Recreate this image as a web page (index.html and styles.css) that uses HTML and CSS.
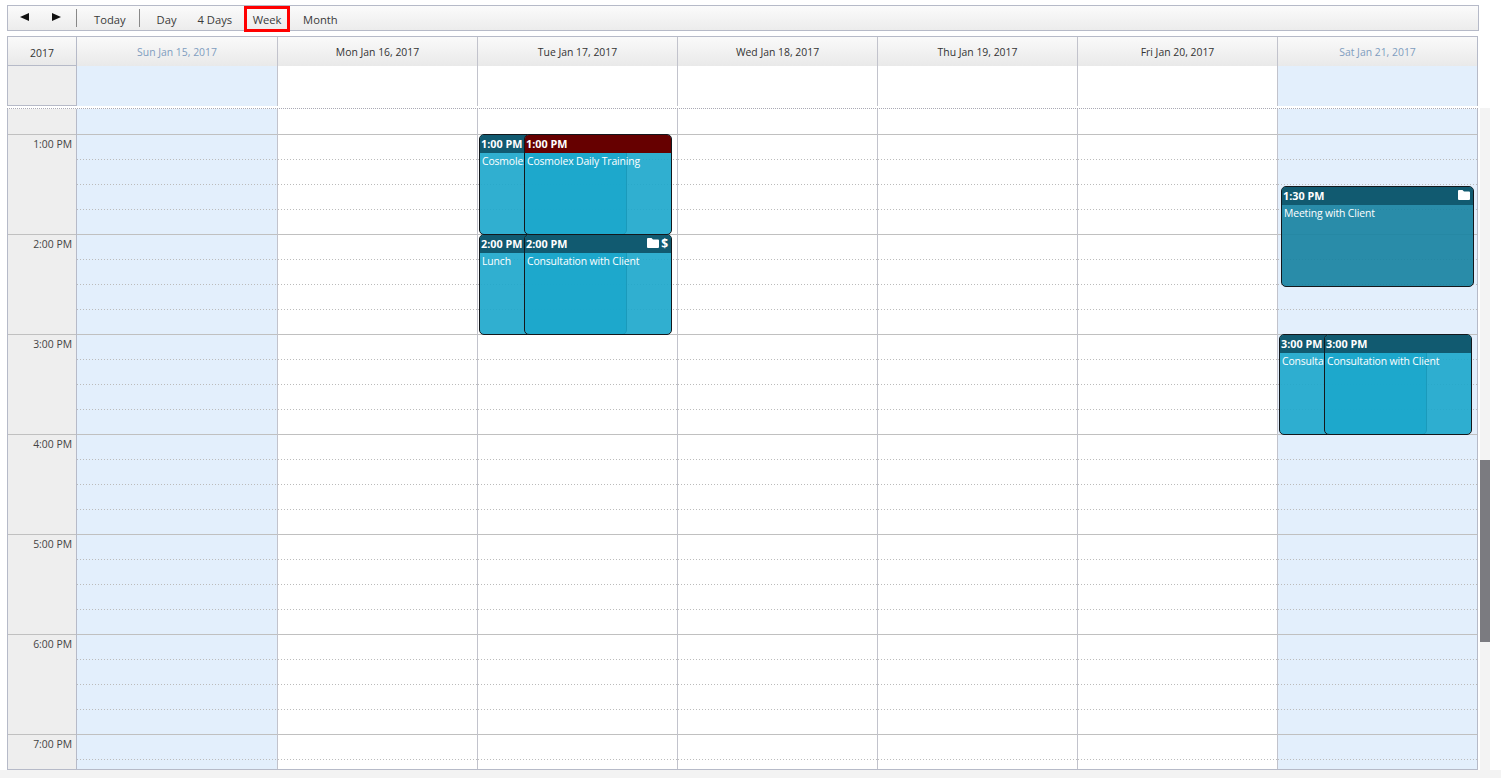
FILE: index.html
```html
<!DOCTYPE html>
<html lang="en">
<head>
    <meta charset="UTF-8">
    <meta name="viewport" content="width=device-width, initial-scale=1.0">
    <title>Week Calendar</title>
    <link rel="stylesheet" href="styles.css">
</head>
<body>
    <div class="toolbar">
        <button class="nav-btn" aria-label="Previous">
            <svg width="9" height="8" viewBox="0 0 9 8"><path d="M0 4 9 0V8Z"/></svg>
        </button>
        <button class="nav-btn" aria-label="Next">
            <svg width="9" height="8" viewBox="0 0 9 8"><path d="M9 4 0 0V8Z"/></svg>
        </button>
        <span class="sep sep-first"></span>
        <button class="tb-btn">Today</button>
        <span class="sep"></span>
        <button class="tb-btn tb-day">Day</button>
        <button class="tb-btn">4 Days</button>
        <button class="tb-btn active">Week</button>
        <button class="tb-btn">Month</button>
    </div>

    <div class="cal-head">
        <div class="year-col">
            <div class="year-cell">2017</div>
            <div class="allday-time"></div>
        </div>
        <div class="head-col weekend"><div class="head-cell">Sun Jan 15, 2017</div><div class="allday"></div></div>
        <div class="head-col"><div class="head-cell">Mon Jan 16, 2017</div><div class="allday"></div></div>
        <div class="head-col"><div class="head-cell">Tue Jan 17, 2017</div><div class="allday"></div></div>
        <div class="head-col"><div class="head-cell">Wed Jan 18, 2017</div><div class="allday"></div></div>
        <div class="head-col"><div class="head-cell">Thu Jan 19, 2017</div><div class="allday"></div></div>
        <div class="head-col"><div class="head-cell">Fri Jan 20, 2017</div><div class="allday"></div></div>
        <div class="head-col weekend"><div class="head-cell">Sat Jan 21, 2017</div><div class="allday"></div></div>
    </div>

    <div class="cal-wrap">
        <div class="cal-body">
            <div class="time-col" id="time-col"></div>
            <div class="day-col weekend"></div>
            <div class="day-col"></div>
            <div class="day-col">
                <div class="event back ev-1pm">
                    <div class="ev-head"><span class="ev-time">1:00 PM</span></div>
                    <div class="ev-title">Cosmolex Daily Training</div>
                </div>
                <div class="event front ev-1pm">
                    <div class="ev-head red"><span class="ev-time">1:00 PM</span></div>
                    <div class="ev-title">Cosmolex Daily Training</div>
                </div>
                <div class="event back ev-2pm">
                    <div class="ev-head"><span class="ev-time">2:00 PM</span></div>
                    <div class="ev-title">Lunch</div>
                </div>
                <div class="event front ev-2pm">
                    <div class="ev-head">
                        <span class="ev-time">2:00 PM</span>
                        <svg class="folder" width="12" height="10" viewBox="0 0 12 10"><path d="M1 0H4.5L6 1.5H11A1 1 0 0 1 12 2.500V9A1 1 0 0 1 11 10H1A1 1 0 0 1 0 9V1A1 1 0 0 1 1 0Z"/></svg>
                        <span class="dollar">$</span>
                    </div>
                    <div class="ev-title">Consultation with Client</div>
                </div>
            </div>
            <div class="day-col"></div>
            <div class="day-col"></div>
            <div class="day-col"></div>
            <div class="day-col weekend">
                <div class="event muted ev-meeting">
                    <div class="ev-head">
                        <span class="ev-time">1:30 PM</span>
                        <svg class="folder" width="12" height="10" viewBox="0 0 12 10"><path d="M1 0H4.5L6 1.5H11A1 1 0 0 1 12 2.500V9A1 1 0 0 1 11 10H1A1 1 0 0 1 0 9V1A1 1 0 0 1 1 0Z"/></svg>
                    </div>
                    <div class="ev-title">Meeting with Client</div>
                </div>
                <div class="event back ev-3pm">
                    <div class="ev-head"><span class="ev-time">3:00 PM</span></div>
                    <div class="ev-title">Consultation with Client</div>
                </div>
                <div class="event front ev-3pm">
                    <div class="ev-head"><span class="ev-time">3:00 PM</span></div>
                    <div class="ev-title">Consultation with Client</div>
                </div>
            </div>
        </div>
        <div class="scroll-track"><div class="scroll-thumb"></div></div>
    </div>
    <div class="bottom-strip"></div>

    <script src="calendar.js"></script>
</body>
</html>
```

FILE: styles.css
```css
html, body {
    height: 100%;
    overflow: hidden;
}
body {
    font-family: "Open Sans", "Liberation Sans", sans-serif;
    font-size: 10.4px;
    color: #333;
    background-color: #fff;
    margin: 0;
    padding: 0;
}
button {
    font: inherit;
    color: inherit;
    background: none;
    border: 0;
    padding: 0;
}

.toolbar {
    box-sizing: border-box;
    display: flex;
    align-items: center;
    width: 1472px;
    height: 26px;
    margin: 5px 0 5px 7px;
    padding-left: 12px;
    border: 1px solid #b6bac8;
    background: linear-gradient(#fbfbfb, #ececec);
}
.nav-btn {
    display: flex;
    width: 32px;
    height: 8px;
    margin-top: -3px;
    fill: #111;
}
.sep {
    width: 1px;
    height: 18px;
    background-color: #888;
}
.sep-first {
    margin: 0 7px 0 -8px;
}
.tb-btn {
    height: 20px;
    padding: 2px 10px 0;
    font-size: 11.2px;
    color: #3a3a3a;
}
.tb-btn + .sep {
    margin-left: 3px;
    margin-right: 7px;
}
.tb-day {
    margin-right: 1px;
}
.active {
    width: 40px;
    padding: 0;
    margin: 2px 6px 0 5px;
    outline: 3px solid #f00;
}

.cal-head {
    box-sizing: border-box;
    display: grid;
    grid-template-columns: 70px 201px repeat(6, 200px);
    width: 1471px;
    height: 70px;
    margin-left: 7px;
    border-top: 1px solid #b6bac8;
}
.year-col {
    box-sizing: border-box;
    border: 1px solid #b6bac8;
    border-top: 0;
}
.year-cell {
    height: 28px;
    line-height: 32px;
    text-align: center;
    border-bottom: 1px solid #b6bac8;
    background: linear-gradient(#fafafa, #e9e9e9);
}
.allday-time {
    height: 39px;
    background-color: #eee;
}
.head-col {
    box-sizing: border-box;
    border-right: 1px solid #c2c3cc;
}
.head-col:last-child {
    border-right-color: #b6bac8;
}
.head-cell {
    height: 29px;
    line-height: 30px;
    text-align: center;
    background: linear-gradient(#fafafa, #e9e9e9);
}
.allday {
    height: 40px;
}
.weekend .head-cell {
    color: #7f9dbf;
}
.weekend .allday, .day-col.weekend {
    background-color: #e3effc;
}

.cal-wrap {
    display: flex;
    gap: 2px;
    margin: 2px 0 0 7px;
}
.cal-body {
    box-sizing: border-box;
    display: grid;
    grid-template-columns: 70px 201px repeat(6, 200px);
    width: 1471px;
    height: 662px;
    overflow: hidden;
    border-top: 1px dotted #a9a9b4;
    border-bottom: 1px solid #b6bac8;
}
.time-col {
    box-sizing: border-box;
    border-left: 1px solid #b6bac8;
    border-right: 1px solid #b6bac8;
    background-color: #eee;
}
.hour-label {
    box-sizing: border-box;
    height: 100px;
    padding: 2px 4px 0 0;
    text-align: right;
    color: #444;
    border-bottom: 1px solid #c0c0c0;
}
.hour-label.first {
    height: 26px;
}
.day-col {
    box-sizing: border-box;
    position: relative;
    border-right: 1px solid #c2c3cc;
}
.day-col:last-child {
    border-right-color: #b6bac8;
}
.slot {
    box-sizing: border-box;
    height: 25px;
    background: linear-gradient(to right, #bbb 1px, transparent 1px) left bottom / 3px 1px repeat-x;
}
.slot.first {
    height: 26px;
}
.slot.hour-end {
    background: none;
    border-bottom: 1px solid #c0c0c0;
}

.scroll-track {
    width: 10px;
    height: 662px;
    background-color: #f3f3f3;
}
.scroll-thumb {
    width: 10px;
    height: 182px;
    margin-top: 352px;
    background-color: #7b7b80;
}
.bottom-strip {
    height: 8px;
    background-color: #f3f3f3;
}

.event {
    box-sizing: border-box;
    position: absolute;
    overflow: hidden;
    width: 148px;
    height: 101px;
    color: #fff;
    border: 1px solid #14181c;
    border-radius: 5px;
    background-color: rgba(27, 167, 203, 0.91);
}
.event.back {
    left: 1px;
}
.event.front {
    left: 46px;
}
.event.muted {
    left: 3px;
    width: 193px;
    background-color: rgba(22, 130, 160, 0.91);
}
.ev-1pm { top: 25px; }
.ev-2pm { top: 125px; }
.ev-3pm { top: 225px; }
.ev-meeting { top: 77px; }
.ev-head {
    display: flex;
    align-items: center;
    gap: 2px;
    height: 18px;
    padding: 0 3px 0 1px;
    background-color: #115a70;
}
.ev-head.red {
    background-color: #660000;
}
.ev-time {
    flex: 1;
    margin-bottom: 2px;
    font-size: 10.8px;
    font-weight: 700;
    white-space: nowrap;
}
.folder {
    margin-bottom: 2px;
    fill: #fff;
}
.dollar {
    margin-bottom: 2px;
    font-weight: 700;
    font-size: 12px;
}
.ev-title {
    padding: 1px 0 0 2px;
    letter-spacing: -0.13px;
    white-space: nowrap;
}
.back .ev-title {
    width: 42px;
    overflow: hidden;
}
```

FILE: calendar.js
```js
// build the slot rows, every column has the same ones
document.addEventListener('DOMContentLoaded', function() {
    const hours = ['1:00 PM', '2:00 PM', '3:00 PM', '4:00 PM', '5:00 PM', '6:00 PM', '7:00 PM'];

    const timeCol = document.getElementById('time-col');
    const firstLabel = document.createElement('div');
    firstLabel.classList.add('hour-label', 'first');
    timeCol.appendChild(firstLabel);
    hours.forEach(hour => {
        const label = document.createElement('div');
        label.classList.add('hour-label');
        label.textContent = hour;
        timeCol.appendChild(label);
    });

    document.querySelectorAll('.day-col').forEach(col => {
        const slots = document.createDocumentFragment();
        const first = document.createElement('div');
        first.classList.add('slot', 'first', 'hour-end');
        slots.appendChild(first);
        for (let i = 1; i <= hours.length * 4; i++) {
            const slot = document.createElement('div');
            slot.classList.add('slot');
            if (i % 4 === 0) slot.classList.add('hour-end');
            slots.appendChild(slot);
        }
        col.insertBefore(slots, col.firstChild);
    });
});
```
